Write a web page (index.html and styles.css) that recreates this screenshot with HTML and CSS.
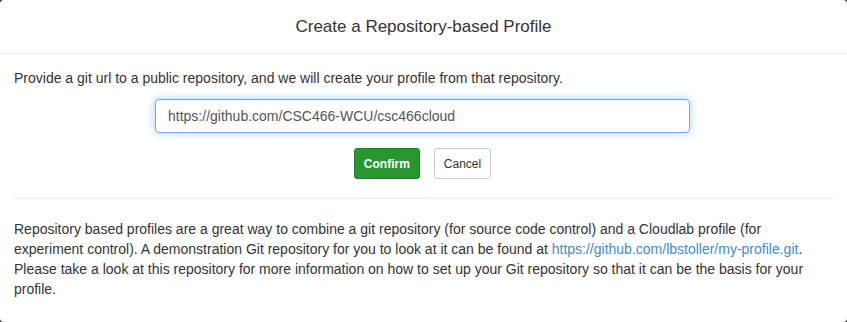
FILE: index.html
```html
<!DOCTYPE html>
<html lang="en">
<head>
    <meta charset="UTF-8">
    <title>Create a Repository-based Profile</title>
    <link rel="stylesheet" href="styles.css">
</head>
<body>
    <div class="modal">
        <div class="modal-header">
            <h4 class="modal-title">Create a Repository-based Profile</h4>
        </div>
        <div class="modal-body">
            <p>Provide a git url to a public repository, and we will create your profile from that repository.</p>
            <div class="url-row">
                <input type="text" class="form-control" value="https://github.com/CSC466-WCU/csc466cloud">
            </div>
            <div class="button-row">
                <button class="btn btn-success">Confirm</button>
                <button class="btn btn-default">Cancel</button>
            </div>
            <hr>
            <p class="help">Repository based profiles are a great way to combine a git repository (for source code control) and a Cloudlab profile (for experiment control). A demonstration Git repository for you to look at it can be found at <a href="#">https://github.com/lbstoller/my-profile.git</a>. Please take a look at this repository for more information on how to set up your Git repository so that it can be the basis for your profile.</p>
        </div>
    </div>
</body>
</html>
```

FILE: styles.css
```css
* {
    margin: 0;
    padding: 0;
    box-sizing: border-box;
}
body {
    font-family: 'Liberation Sans', Arial, sans-serif;
    font-size: 14px;
    line-height: 20px;
    color: #333;
    background-color: #2b3a3a;
}
.modal {
    background-color: #fff;
    border-radius: 4px;
    height: 322px;
}
.modal-header {
    height: 54px;
    border-bottom: 1px solid #e5e5e5;
    display: flex;
    align-items: center;
    justify-content: center;
}
.modal-title {
    font-size: 17px;
    font-weight: normal;
    color: #333;
}
.modal-body {
    padding: 14px 14px;
}
.url-row {
    display: flex;
    justify-content: center;
    margin-top: 11px;
    padding-right: 2px;
}
.form-control {
    width: 535px;
    height: 34px;
    padding: 6px 12px;
    font-family: inherit;
    font-size: 14px;
    color: #555;
    border: 1px solid #66afe9;
    border-radius: 4px;
    outline: none;
    box-shadow: inset 0 1px 1px rgba(0, 0, 0, .075), 0 0 8px rgba(102, 175, 233, .6);
}
.button-row {
    display: flex;
    justify-content: center;
    gap: 14px;
    margin-top: 15px;
    padding-right: 2px;
}
.btn {
    height: 31px;
    padding: 0 9px;
    font-family: inherit;
    font-size: 12px;
    border-radius: 3px;
    border: 1px solid #ccc;
    background: #fff;
    color: #333;
}
.btn-success {
    background-color: #28952f;
    border-color: #218028;
    color: #fff;
    font-weight: bold;
}
hr {
    border: 0;
    border-top: 1px solid #eee;
    margin: 19px 0 20px;
}
.help a {
    color: #428bca;
    text-decoration: none;
}
```
